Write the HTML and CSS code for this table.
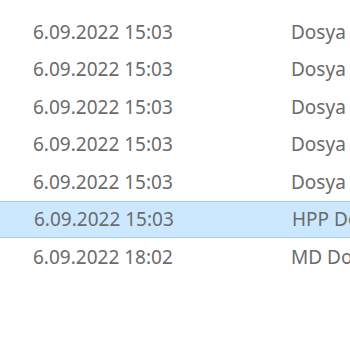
FILE: index.html
```html
<!DOCTYPE html>
<html lang="tr">
<head>
    <meta charset="UTF-8">
    <meta name="viewport" content="width=device-width, initial-scale=1.0">
    <title>Dosyalar</title>
    <link rel="stylesheet" href="styles.css">
</head>
<body>
    <div class="file-list">
        <div class="row">
            <span class="date">6.09.2022 15:03</span>
            <span class="type">Dosya klasörü</span>
        </div>
        <div class="row">
            <span class="date">6.09.2022 15:03</span>
            <span class="type">Dosya klasörü</span>
        </div>
        <div class="row">
            <span class="date">6.09.2022 15:03</span>
            <span class="type">Dosya klasörü</span>
        </div>
        <div class="row">
            <span class="date">6.09.2022 15:03</span>
            <span class="type">Dosya klasörü</span>
        </div>
        <div class="row">
            <span class="date">6.09.2022 15:03</span>
            <span class="type">Dosya klasörü</span>
        </div>
        <div class="row selected">
            <span class="date">6.09.2022 15:03</span>
            <span class="type">HPP Dosyası</span>
        </div>
        <div class="row">
            <span class="date">6.09.2022 18:02</span>
            <span class="type">MD Dosyası</span>
        </div>
    </div>
</body>
</html>
```

FILE: styles.css
```css
body {
    margin: 0;
    padding: 0;
    background-color: #ffffff;
    font-family: "Noto Sans", "Open Sans", sans-serif;
    overflow: hidden;
}

.file-list {
    padding-top: 13px;
    width: 420px;
}

.row {
    display: flex;
    align-items: center;
    height: 37.5px;
    box-sizing: border-box;
    font-size: 19px;
    color: #6b6b6b;
    white-space: nowrap;
}

.row.selected {
    background-color: #cce8ff;
    border: 1px solid #99d1ff;
    margin-left: -1px;
    padding-left: 1px;
}

.date {
    width: 258px;
    padding-left: 33px;
    flex-shrink: 0;
}

.type {
    flex-shrink: 0;
}
```
